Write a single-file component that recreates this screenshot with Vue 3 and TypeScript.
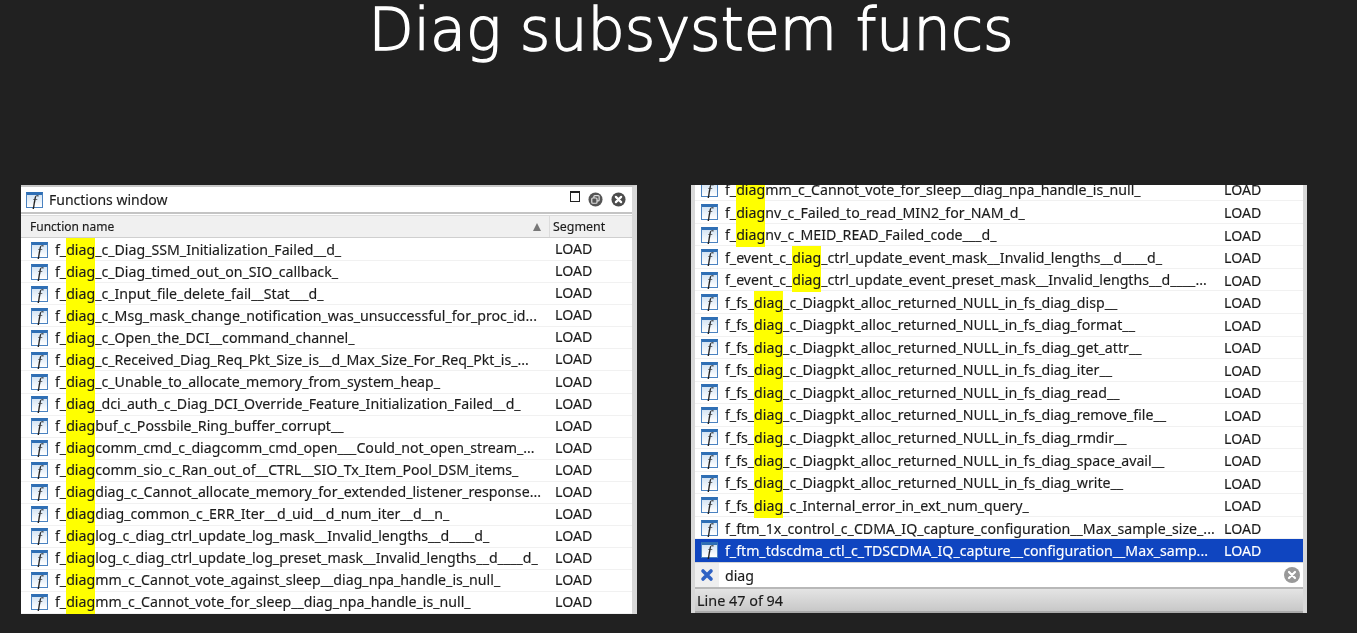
<script setup lang="ts">
import { computed } from "vue";

const leftNames = [
    "f_diag_c_Diag_SSM_Initialization_Failed__d_",
    "f_diag_c_Diag_timed_out_on_SIO_callback_",
    "f_diag_c_Input_file_delete_fail__Stat___d_",
    "f_diag_c_Msg_mask_change_notification_was_unsuccessful_for_proc_id...",
    "f_diag_c_Open_the_DCI__command_channel_",
    "f_diag_c_Received_Diag_Req_Pkt_Size_is__d_Max_Size_For_Req_Pkt_is_...",
    "f_diag_c_Unable_to_allocate_memory_from_system_heap_",
    "f_diag_dci_auth_c_Diag_DCI_Override_Feature_Initialization_Failed__d_",
    "f_diagbuf_c_Possbile_Ring_buffer_corrupt__",
    "f_diagcomm_cmd_c_diagcomm_cmd_open___Could_not_open_stream_...",
    "f_diagcomm_sio_c_Ran_out_of__CTRL__SIO_Tx_Item_Pool_DSM_items_",
    "f_diagdiag_c_Cannot_allocate_memory_for_extended_listener_response...",
    "f_diagdiag_common_c_ERR_Iter__d_uid__d_num_iter__d__n_",
    "f_diaglog_c_diag_ctrl_update_log_mask__Invalid_lengths__d____d_",
    "f_diaglog_c_diag_ctrl_update_log_preset_mask__Invalid_lengths__d____d_",
    "f_diagmm_c_Cannot_vote_against_sleep__diag_npa_handle_is_null_",
    "f_diagmm_c_Cannot_vote_for_sleep__diag_npa_handle_is_null_",
];

const rightNames = [
    "f_diagmm_c_Cannot_vote_for_sleep__diag_npa_handle_is_null_",
    "f_diagnv_c_Failed_to_read_MIN2_for_NAM_d_",
    "f_diagnv_c_MEID_READ_Failed_code___d_",
    "f_event_c_diag_ctrl_update_event_mask__Invalid_lengths__d____d_",
    "f_event_c_diag_ctrl_update_event_preset_mask__Invalid_lengths__d____...",
    "f_fs_diag_c_Diagpkt_alloc_returned_NULL_in_fs_diag_disp__",
    "f_fs_diag_c_Diagpkt_alloc_returned_NULL_in_fs_diag_format__",
    "f_fs_diag_c_Diagpkt_alloc_returned_NULL_in_fs_diag_get_attr__",
    "f_fs_diag_c_Diagpkt_alloc_returned_NULL_in_fs_diag_iter__",
    "f_fs_diag_c_Diagpkt_alloc_returned_NULL_in_fs_diag_read__",
    "f_fs_diag_c_Diagpkt_alloc_returned_NULL_in_fs_diag_remove_file__",
    "f_fs_diag_c_Diagpkt_alloc_returned_NULL_in_fs_diag_rmdir__",
    "f_fs_diag_c_Diagpkt_alloc_returned_NULL_in_fs_diag_space_avail__",
    "f_fs_diag_c_Diagpkt_alloc_returned_NULL_in_fs_diag_write__",
    "f_fs_diag_c_Internal_error_in_ext_num_query_",
    "f_ftm_1x_control_c_CDMA_IQ_capture_configuration__Max_sample_size_...",
    "f_ftm_tdscdma_ctl_c_TDSCDMA_IQ_capture__configuration__Max_samp...",
];

// only the first match in a name gets the yellow mark
const splitName = (name: string) => {
    const at = name.indexOf("diag");
    if (at < 0) return { before: name, hit: "", after: "" };
    return { before: name.slice(0, at), hit: "diag", after: name.slice(at + 4) };
};

const leftRows = computed(() => leftNames.map(splitName));
const rightRows = computed(() => rightNames.map(splitName));
</script>

<template>
    <div class="page">
        <h1 class="title">Diag subsystem funcs</h1>
        <div class="windows">
            <section class="window left">
                <header class="titlebar">
                    <span class="fn-icon"><i>f</i></span>
                    <span class="titlebar-text">Functions window</span>
                    <span class="controls">
                        <span class="maximize"></span>
                        <svg class="ctl-icon" viewBox="0 0 16 16">
                            <circle cx="8" cy="8" r="7.5" fill="#555" />
                            <rect x="6.3" y="3.8" width="5.6" height="5.6" rx="1" fill="none" stroke="#ddd" stroke-width="1.3" />
                            <rect x="4" y="6.4" width="5.6" height="5.6" rx="1" fill="#555" stroke="#ddd" stroke-width="1.3" />
                        </svg>
                        <svg class="ctl-icon" viewBox="0 0 16 16">
                            <circle cx="8" cy="8" r="7.5" fill="#4c4c4c" />
                            <path d="M5.2 5.2l5.6 5.6M10.8 5.2l-5.6 5.6" stroke="#fff" stroke-width="2.4" stroke-linecap="round" />
                        </svg>
                    </span>
                </header>
                <div class="columns">
                    <div class="col-name">
                        <span>Function name</span>
                        <span class="sort-arrow"></span>
                    </div>
                    <div class="col-segment">Segment</div>
                </div>
                <div class="list">
                    <div v-for="(row, i) in leftRows" :key="i" class="row">
                        <span class="fn-icon"><i>f</i></span>
                        <span class="name">{{ row.before }}<mark>{{ row.hit }}</mark>{{ row.after }}</span>
                        <span class="segment">LOAD</span>
                    </div>
                </div>
            </section>

            <section class="window right">
                <div class="list">
                    <div
                        v-for="(row, i) in rightRows"
                        :key="i"
                        class="row"
                        :class="{ selected: i === rightRows.length - 1 }"
                    >
                        <span class="fn-icon"><i>f</i></span>
                        <span class="name">{{ row.before }}<mark v-if="row.hit">{{ row.hit }}</mark>{{ row.after }}</span>
                        <span class="segment">LOAD</span>
                    </div>
                </div>
                <div class="search">
                    <span class="search-close">
                        <svg viewBox="0 0 14 14" width="14" height="14">
                            <path d="M3 3l8 8M11 3l-8 8" stroke="#2f62c4" stroke-width="3.6" stroke-linecap="round" />
                        </svg>
                    </span>
                    <span class="search-text">diag</span>
                    <svg class="search-clear" viewBox="0 0 16 16">
                        <circle cx="8" cy="8" r="8" fill="#999" />
                        <path d="M5 5l6 6M11 5l-6 6" stroke="#fff" stroke-width="2.2" stroke-linecap="round" />
                    </svg>
                </div>
                <footer class="status">Line 47 of 94</footer>
            </section>
        </div>
    </div>
</template>

<style scoped>
.page {
    height: 633px;
    box-sizing: border-box;
    overflow: hidden;
    background: #212121;
    font-family: "Noto Sans", "Liberation Sans", sans-serif;
    display: flex;
    flex-direction: column;
}

.title {
    height: 185px;
    flex: none;
    margin: 0;
    padding-left: 25px;
    box-sizing: border-box;
    text-align: center;
    font-family: "DejaVu Sans", sans-serif;
    font-weight: 200;
    font-size: 58.7px;
    line-height: 60px;
    color: #fff;
    -webkit-text-stroke: 1.4px #fff;
}

.windows {
    display: flex;
    gap: 54px;
    padding-left: 21px;
}

.window {
    width: 616px;
    height: 429px;
    box-sizing: border-box;
    background: #fff;
    color: #1c1c1c;
    display: flex;
    flex-direction: column;
    overflow: hidden;
    filter: blur(0.35px);
    -webkit-text-stroke: 0.15px currentColor;
}

.window.left {
    border-top: 2px solid #c8c8c8;
    border-right: 5px solid #d8d8d8;
}

.window.right {
    border-left: 4px solid #d8d8d8;
    border-right: 4px solid #d8d8d8;
    height: 428px;
}

.titlebar {
    height: 25px;
    display: flex;
    align-items: center;
    padding-left: 5px;
    border-bottom: 2px solid #c4c4c4;
    flex: none;
}

.titlebar-text {
    margin-left: 6px;
    font-size: 14px;
    line-height: 20px;
}

.controls {
    margin-left: auto;
    margin-right: 6px;
    display: flex;
    align-items: center;
    gap: 8px;
}

.maximize {
    width: 8px;
    height: 8px;
    margin-top: -6px;
    border: 1px solid #222;
    border-top-width: 2px;
}

.ctl-icon {
    width: 15px;
    height: 15px;
}

.columns {
    height: 23px;
    margin-top: 1px;
    flex: none;
    display: flex;
    font-size: 12.4px;
    background: #f0f0f0;
    border-top: 1px solid #dcdcdc;
    border-bottom: 1px solid #cfcfcf;
    box-sizing: border-box;
    line-height: 19px;
}

.col-name {
    width: 529px;
    padding: 0 9px;
    box-sizing: border-box;
    display: flex;
    align-items: center;
    justify-content: space-between;
    border-right: 1px solid #dcdcdc;
    font-size: 12px;
}

.sort-arrow {
    width: 0;
    height: 0;
    margin-right: -1px;
    border-left: 4.5px solid transparent;
    border-right: 4.5px solid transparent;
    border-bottom: 8px solid #777;
}

.col-segment {
    padding-left: 3px;
    display: flex;
    align-items: center;
}

.list {
    flex: 1;
    min-height: 0;
    overflow: hidden;
    display: flex;
    flex-direction: column;
    justify-content: flex-end;
}

.row {
    height: 22.06px;
    flex: none;
    display: flex;
    align-items: center;
    padding-left: 10px;
    font-size: 14.17px;
    line-height: 22px;
    white-space: nowrap;
    border-bottom: 1px solid #f1f1f1;
    box-sizing: border-box;
}

.right .row {
    height: 22.56px;
    padding-left: 6px;
}

.name {
    margin-left: 7px;
    width: 500px;
    flex: none;
    margin-top: 1px;
}

.right .name {
    width: 499px;
    margin-top: 2px;
}

mark {
    display: inline-block;
    height: 24px;
    margin-top: -1px;
    vertical-align: top;
    background: #ffff00;
    color: inherit;
    line-height: 24px;
}

.segment {
    margin-top: -1px;
}

.right .segment {
    margin-top: 2px;
}

.row.selected {
    background: #0f45c0;
    border-bottom-color: #0f45c0;
    color: #fff;
}

.fn-icon {
    width: 17px;
    height: 16px;
    flex: none;
    box-sizing: border-box;
    border: 1px solid #4a82c0;
    border-top: 3px solid #2f6fb5;
    background: linear-gradient(#d4e4f4, #fff);
    color: #222;
    font-family: "Liberation Serif", serif;
    font-size: 15px;
    line-height: 12px;
    text-align: center;
    display: inline-block;
}

.search {
    height: 27px;
    flex: none;
    display: flex;
    align-items: center;
    border-top: 1px solid #d4d4d4;
    border-bottom: 2px solid #b8b8b8;
    box-sizing: border-box;
}

.search-close {
    width: 24px;
    height: 100%;
    flex: none;
    background: #efefef;
    display: flex;
    align-items: center;
    justify-content: center;
    margin-right: 6px;
}

.search-text {
    font-size: 14.17px;
}

.search-clear {
    margin-left: auto;
    margin-right: 3px;
    width: 16px;
    height: 16px;
}

.status {
    height: 24px;
    flex: none;
    display: flex;
    align-items: center;
    padding-left: 2px;
    font-size: 14.4px;
    background: linear-gradient(#e4e4e4, #c8c8c8);
    border-bottom: 2px solid #aaa;
    box-sizing: border-box;
}
</style>

<style>
html,
body {
    background: #212121;
}
</style>
